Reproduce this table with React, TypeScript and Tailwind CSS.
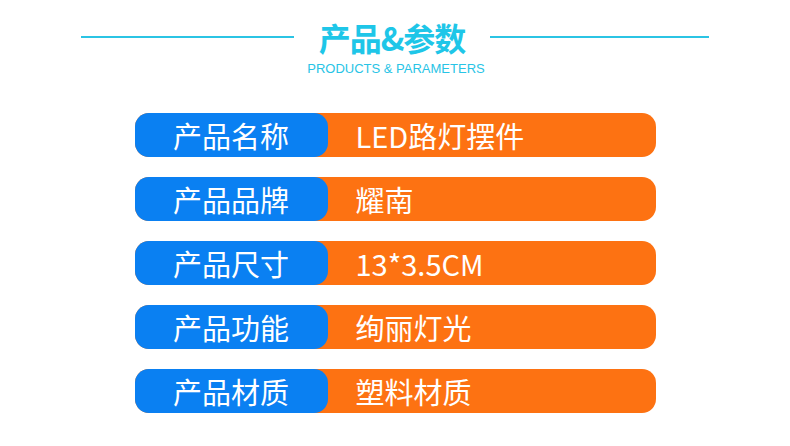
const rows = [
  { label: '产品名称', value: 'LED路灯摆件' },
  { label: '产品品牌', value: '耀南' },
  { label: '产品尺寸', value: '13*3.5CM' },
  { label: '产品功能', value: '绚丽灯光' },
  { label: '产品材质', value: '塑料材质' },
];

export default function App() {
  return (
    <div className="flex h-[446px] w-[790px] flex-col items-center bg-white font-['Noto_Sans_CJK_SC',sans-serif]">
      <div className="mt-[20px] flex items-center">
        <div className="h-[2px] w-[213px] bg-[#2bc4e4]" />
        <h1 className="mx-[25px] text-[32px] font-bold leading-[34px] tracking-[-1px] text-[#1ec6e8]">
          产品&amp;参数
        </h1>
        <div className="h-[2px] w-[219px] bg-[#2bc4e4]" />
      </div>
      <p className="mt-[7px] ml-[2px] font-['Liberation_Sans',sans-serif] text-[13px] leading-[16px] text-[#28c4e6]">
        PRODUCTS &amp; PARAMETERS
      </p>

      <div className="mt-[36px] flex flex-col gap-[20px]">
        {rows.map((r) => (
          <div key={r.label} className="flex h-[44px] w-[521px] rounded-[14px] bg-[#fd7212]">
            <div className="flex w-[193px] items-center justify-center rounded-[14px] bg-[#0a80f2] text-[29px] leading-none text-white">
              {r.label}
            </div>
            <div className="flex items-center pl-[28px] text-[29px] leading-none text-white">{r.value}</div>
          </div>
        ))}
      </div>
    </div>
  );
}
